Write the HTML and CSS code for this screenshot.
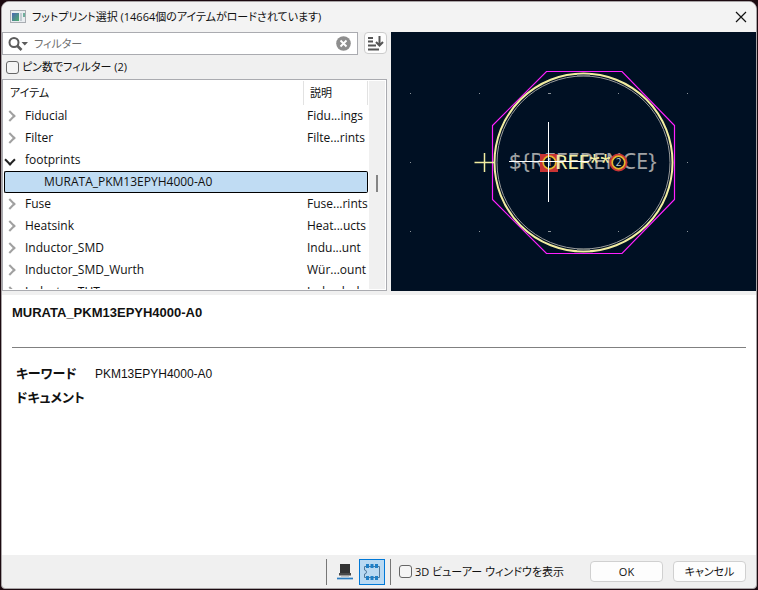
FILE: index.html
```html
<!DOCTYPE html>
<html lang="ja">
<head>
<meta charset="utf-8">
<meta name="viewport" content="width=device-width, initial-scale=1">
<title>フットプリント選択</title>
<link rel="stylesheet" href="styles.css">
</head>
<body>
<div class="dialog">
  <header class="titlebar">
    <svg class="app-icon" width="16" height="14" viewBox="0 0 16 14" aria-hidden="true">
      <defs><linearGradient id="screen" x1="0" y1="0" x2="1" y2="1"><stop offset="0" stop-color="#4a68b4"/><stop offset="1" stop-color="#4fae6c"/></linearGradient></defs>
      <rect x=".5" y=".5" width="15" height="12" fill="#e9edf0" stroke="#a9adb2"/>
      <rect x="2" y="3" width="7" height="8" fill="url(#screen)"/>
      <rect x="10" y="3" width="2" height="8" fill="#c3ccd2"/>
      <rect x="13" y="3" width="2" height="4" fill="#6fae9c"/>
    </svg>
    <h1 class="title">フットプリント選択 (14664個のアイテムがロードされています)</h1>
    <button class="close" type="button" aria-label="閉じる">
      <svg width="12" height="12" viewBox="0 0 12 12"><path d="M1 1 11 11M11 1 1 11" stroke="#111" stroke-width="1.2"/></svg>
    </button>
  </header>

  <main class="browser">
    <section class="library">
      <div class="search-row">
        <div class="search">
          <svg class="search-icon" width="21" height="16" viewBox="0 0 21 16" aria-hidden="true">
            <circle cx="6" cy="6.500" r="4.500" fill="none" stroke="#5c5c5c" stroke-width="2"/>
            <path d="M9 9.500 13.500 14" stroke="#5c5c5c" stroke-width="2.600"/>
            <path d="M13.500 6h6.500l-3.200 3.500z" fill="#5c5c5c"/>
          </svg>
          <input class="search-input" type="text" placeholder="フィルター" aria-label="フィルター">
          <button class="clear" type="button" aria-label="クリア">
            <svg width="15" height="15" viewBox="0 0 15 15"><circle cx="7.500" cy="7.500" r="7.300" fill="#8e8e8e"/><path d="M4.500 4.500l6 6m0-6l-6 6" stroke="#fff" stroke-width="1.900"/></svg>
          </button>
        </div>
        <button class="sort" type="button" aria-label="並べ替え">
          <svg width="17" height="15" viewBox="0 0 17 15"><path d="M1 2h5M1 5.500h5M1 9.500h8M1 13.500h11" stroke="#555" stroke-width="1.800"/><path d="M12.500 0v9.500M9 6l3.500 3.500L16 6" fill="none" stroke="#555" stroke-width="2"/></svg>
        </button>
      </div>
      <label class="check pin-filter"><input type="checkbox">ピン数でフィルター (2)</label>
      <div class="tree">
        <div class="tree-view">
          <table class="items">
            <thead><tr><th scope="col">アイテム</th><th class="desc" scope="col">説明</th></tr></thead>
            <tbody>
              <tr><td><span class="node">Fiducial</span></td><td class="desc">Fidu...ings</td></tr>
              <tr><td><span class="node">Filter</span></td><td class="desc">Filte...rints</td></tr>
              <tr><td><span class="node open">footprints</span></td><td class="desc"></td></tr>
              <tr class="selected"><td><span class="leaf">MURATA_PKM13EPYH4000-A0</span></td><td class="desc"></td></tr>
              <tr><td><span class="node">Fuse</span></td><td class="desc">Fuse...rints</td></tr>
              <tr><td><span class="node">Heatsink</span></td><td class="desc">Heat...ucts</td></tr>
              <tr><td><span class="node">Inductor_SMD</span></td><td class="desc">Indu...unt</td></tr>
              <tr><td><span class="node">Inductor_SMD_Wurth</span></td><td class="desc">Wür...ount</td></tr>
              <tr><td><span class="node">Inductor_THT</span></td><td class="desc">Indu...hole</td></tr>
            </tbody>
          </table>
        </div>
        <div class="scrollbar"><span class="thumb"></span></div>
      </div>
    </section>

    <svg class="preview" viewBox="0 0 365 259" preserveAspectRatio="xMidYMid meet" role="img" aria-label="フットプリントのプレビュー">
      <g fill="#8a9299">
        <rect x="19" y="61" width="1" height="1"/><rect x="88" y="61" width="1" height="1"/><rect x="157" y="61" width="3" height="1"/><rect x="227" y="61" width="1" height="1"/><rect x="296" y="61" width="1" height="1"/>
        <rect x="19" y="130" width="1" height="1"/><rect x="296" y="130" width="1" height="1"/>
        <rect x="19" y="199" width="1" height="1"/><rect x="88" y="199" width="1" height="1"/><rect x="157" y="199" width="3" height="1"/><rect x="227" y="199" width="1" height="1"/><rect x="296" y="199" width="1" height="1"/>
      </g>
      <path d="M155.500 39.500h75.500l52.500 54v74l-52.500 54h-75.500l-54-54v-74z" fill="none" stroke="#ff20ff" stroke-width="1.200"/>
      <circle cx="192.500" cy="130.500" r="86.500" fill="none" stroke="#9a9c9c"/>
      <circle cx="192.500" cy="130.500" r="89" fill="none" stroke="#f2eda1" stroke-width="2"/>
      <path d="M186 43.500h13M186 217.500h13" stroke="#6c7474" stroke-width="2"/>
      <path d="M83.500 130.500h19.500M93.500 121v19" stroke="#f2eda1" stroke-width="1.500"/>
      <text class="silk fab" x="118" y="137">${REFERENCE}</text>
      <rect x="149" y="122" width="18" height="18" fill="#c83434"/>
      <text class="silk ref" x="164" y="137">REF**</text>
      <circle cx="227.500" cy="130.500" r="9" fill="#c83434"/>
      <circle cx="158.500" cy="130.500" r="6.300" fill="#001023" stroke="#e3b72e" stroke-width="1.700"/>
      <circle cx="227.500" cy="130.500" r="6.300" fill="#001023" stroke="#e3b72e" stroke-width="1.700"/>
      <text class="pad" x="158.500" y="134">1</text>
      <text class="pad" x="227.500" y="134">2</text>
      <path d="M118 129.500h80M157.500 90v80" stroke="#fff"/>
    </svg>
  </main>

  <section class="details">
    <h2 class="name">MURATA_PKM13EPYH4000-A0</h2>
    <hr class="rule">
    <dl class="facts">
      <dt>キーワード</dt><dd>PKM13EPYH4000-A0</dd>
      <dt>ドキュメント</dt><dd></dd>
    </dl>
  </section>

  <footer class="actions">
    <div class="modes">
      <button class="mode" type="button" aria-label="3Dプレビュー">
        <svg width="16" height="18" viewBox="0 0 16 18"><path d="M3 1h10v10h-10z" fill="#333"/><path d="M2 10h12v2.500H2z" fill="#4a4a4a"/><path d="M4 13h8" stroke="#999"/><path d="M0 15.500h16" stroke="#2a7cc0" stroke-width="1.700"/></svg>
      </button>
      <button class="mode on" type="button" aria-label="フットプリント表示" aria-pressed="true">
        <svg width="18" height="18" viewBox="0 0 18 18"><path d="M1.500 3.500h15v11h-15v-3.500a2 2 0 0 0 0-4z" fill="none" stroke="#52799b"/><g fill="#1f7fc6"><rect x="3" y="1" width="3" height="4"/><rect x="7.500" y="1" width="3" height="4"/><rect x="12" y="1" width="3" height="4"/><rect x="3" y="13" width="3" height="4"/><rect x="7.500" y="13" width="3" height="4"/><rect x="12" y="13" width="3" height="4"/></g></svg>
      </button>
    </div>
    <label class="check viewer"><input type="checkbox">3D ビューアー ウィンドウを表示</label>
    <button class="push" type="button">OK</button>
    <button class="push" type="button">キャンセル</button>
  </footer>
</div>
</body>
</html>
```
FILE: styles.css
```css
* {
  box-sizing: border-box;
}

body {
  margin: 0;
  height: 100vh;
  padding: 1px;
  background: #1c0a10;
  color: #111;
  font: 12px/22px "Open Sans", "Noto Sans CJK JP", sans-serif;
  font-feature-settings: "palt";
}

button,
input {
  font: inherit;
  font-feature-settings: inherit;
  color: inherit;
}

button {
  padding: 0;
  border: 0;
  background: none;
}

svg {
  display: block;
}

.dialog {
  display: grid;
  grid-template-rows: 30px minmax(0, 259fr) minmax(0, 264fr) 33px;
  height: 100%;
  border: 1px solid #a8a4a6;
  border-radius: 8px 8px 4px 4px;
  overflow: hidden;
  background: #f0f0f0;
}

.titlebar {
  display: flex;
  align-items: center;
  gap: 6px;
  padding: 0 7px 0 8px;
  background: #f3f3f3;
}

.title {
  flex: 1;
  margin: 0;
  font-size: 11px;
  font-weight: 400;
  white-space: nowrap;
}

.close {
  padding: 2px;
}

.browser {
  display: grid;
  grid-template-columns: minmax(0, 389fr) minmax(0, 365fr);
  min-height: 0;
}

.library {
  display: flex;
  flex-direction: column;
  min-height: 0;
  padding-right: 4px;
}

.search-row {
  display: flex;
  gap: 6px;
}

.search {
  display: flex;
  flex: 1;
  align-items: center;
  gap: 5px;
  height: 23px;
  padding: 0 6px 0 5px;
  border: 1px solid #aaabb0;
  background: #fff;
}

.search-input {
  flex: 1;
  min-width: 0;
  height: 20px;
  padding: 0;
  border: 0;
  outline: 0;
  background: none;
  font-size: 11px;
}

.search-input::placeholder {
  color: #6d6d6d;
  opacity: 1;
}

.sort {
  display: grid;
  place-items: center;
  width: 23px;
  height: 22px;
  border: 1px solid #ccc;
  border-radius: 4px;
  background: #fdfdfd;
}

.check {
  display: flex;
  align-items: center;
  gap: 3px;
  font-size: 11px;
  white-space: nowrap;
}

.check input {
  appearance: none;
  width: 13px;
  height: 13px;
  margin: 0;
  border: 1px solid #666;
  border-radius: 3px;
  background: #f5f5f5;
}

.pin-filter {
  height: 24px;
  padding-left: 4px;
}

.tree {
  display: flex;
  flex: 1;
  min-height: 0;
  padding: 1px;
  border: 1px solid #aaabb0;
  background: #fff;
}

.tree-view {
  flex: 1;
  min-width: 0;
  overflow: hidden;
}

.items {
  width: 100%;
  border-spacing: 0;
  table-layout: fixed;
}

.items th {
  height: 24px;
  padding: 0 6px;
  border-right: 1px solid #e2e2e2;
  font-size: 11px;
  font-weight: 400;
  text-align: left;
}

.items td {
  height: 22px;
  padding: 0;
  white-space: nowrap;
}

.items .desc {
  width: 64px;
}

.items td.desc {
  padding-left: 3px;
}

.node,
.leaf {
  display: flex;
  align-items: center;
}

.node::before {
  content: "";
  width: 6px;
  height: 6px;
  margin: 0 11px 0 2px;
  border: solid #a0a0a0;
  border-width: 2px 2px 0 0;
  transform: rotate(45deg);
}

.node.open::before {
  border-color: #222;
  transform: rotate(135deg);
}

.leaf {
  padding-left: 39px;
}

.selected td {
  height: 22px;
  line-height: 20px;
  border: solid #000;
  background: #c0dcf3;
}

.selected td:first-child {
  border-width: 1px 0 1px 1px;
  border-radius: 2px 0 0 2px;
}

.selected td:last-child {
  border-width: 1px 1px 1px 0;
  border-radius: 0 2px 2px 0;
}

.scrollbar {
  display: flex;
  flex-direction: column;
  align-items: center;
  width: 16px;
  margin-left: 1px;
  padding-top: 94px;
  background: #f0f0f0;
}

.thumb {
  width: 2px;
  height: 17px;
  background: #858585;
}

.preview {
  width: 100%;
  height: 100%;
  background: #001023;
}

.silk {
  font-family: "Noto Sans", sans-serif;
  font-size: 22px;
}

.fab {
  fill: #a0a2a4;
}

.ref {
  fill: #f2eda1;
  font-size: 20px;
}

.pad {
  fill: #c4cad0;
  font-size: 10px;
  text-anchor: middle;
}

.details {
  margin-top: 4px;
  padding: 8px 10px;
  background: #fff;
  font-family: "Liberation Sans", "Noto Sans CJK JP", sans-serif;
}

.name {
  margin: 0;
  font-size: 13px;
  line-height: 20px;
}

.rule {
  margin: 24px 0 14px;
  border: 0;
  border-top: 1px solid #808080;
}

.facts {
  display: grid;
  grid-template-columns: max-content 1fr;
  gap: 0 10px;
  margin: 0;
  padding-left: 4px;
  font-size: 13px;
  line-height: 24px;
}

.facts dt {
  font-weight: 700;
}

.facts dd {
  margin: 0;
  font-size: 12px;
}

.actions {
  display: flex;
  align-items: center;
  gap: 10px;
  padding: 0 10px;
}

.modes {
  display: flex;
  gap: 1px;
  margin-left: auto;
  padding: 0 5px;
  border: solid #777;
  border-width: 0 1px;
}

.mode {
  display: grid;
  place-items: center;
  width: 26px;
  height: 26px;
}

.mode.on {
  border: 1px solid #0078d7;
  background: #b9d9f2;
}

.viewer {
  margin: 0 16px 0 -2px;
}

.push {
  width: 73px;
  height: 21px;
  border: 1px solid #d0d0d0;
  border-radius: 4px;
  background: #fdfdfd;
  font-size: 11px;
  line-height: 19px;
}
```
